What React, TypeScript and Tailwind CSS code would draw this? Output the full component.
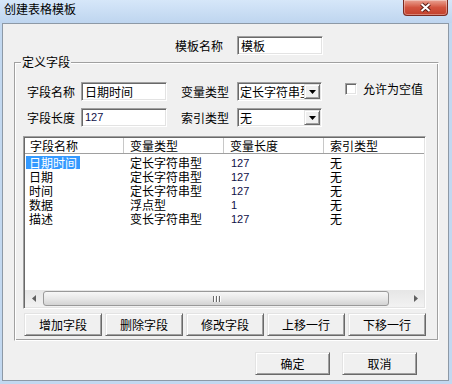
import React from "react";

const sunken =
  "border border-t-[#a0a0a0] border-l-[#a0a0a0] border-r-white border-b-white shadow-[inset_1px_1px_0_#696969,inset_-1px_-1px_0_#e3e3e3]";
const raised =
  "border border-t-[#e3e3e3] border-l-[#e3e3e3] border-r-[#696969] border-b-[#696969] shadow-[inset_1px_1px_0_#fff,inset_-1px_-1px_0_#a0a0a0] bg-[#f0f0f0]";
const num = "font-['Liberation_Sans',Arial,sans-serif] text-[11px] text-[#101048]";

const TextBox = ({ value, numeric, className }: { value: string; numeric?: boolean; className: string }) => (
  <div className={`${sunken} bg-white h-[19px] p-[1px] flex items-center pl-[3px] ${className}`}>
    <span className={numeric ? num : ""}>{value}</span>
  </div>
);

const Combo = ({ value, className }: { value: string; className: string }) => (
  <div className={`${sunken} bg-white h-[19px] p-[1px] flex ${className}`}>
    <span className="flex-1 overflow-hidden whitespace-nowrap pl-[1px] leading-[15px]">{value}</span>
    <div className={`${raised} w-[16px] h-[15px] flex items-center justify-center`}>
      <svg width="7" height="4" viewBox="0 0 7 4">
        <path d="M0 0 H7 L3.5 4 Z" fill="#000" />
      </svg>
    </div>
  </div>
);

const Button = ({ label, className }: { label: string; className: string }) => (
  <div className={`${raised} flex items-center justify-center ${className}`}>{label}</div>
);

const rows = [
  ["日期时间", "定长字符串型", "127", "无"],
  ["日期", "定长字符串型", "127", "无"],
  ["时间", "定长字符串型", "127", "无"],
  ["数据", "浮点型", "1", "无"],
  ["描述", "变长字符串型", "127", "无"],
];

export default function App() {
  return (
    <div className="w-[452px] h-[384px] bg-[#c2d8f0] flex flex-col text-[12px] text-black font-['Noto_Sans_CJK_SC','Noto_Sans',sans-serif]">
      {/* title bar */}
      <div className="h-[23px] flex items-start bg-linear-to-b from-[#d6e7f9] to-[#bed5ef]">
        <span className="pl-[4px] pt-[1px] leading-[16px]">创建表格模板</span>
        <div className="ml-auto mr-[4px] w-[45px] h-[16px] rounded-b-[4px] border border-t-0 border-[#7a2a20] bg-linear-to-b from-[#e9a293] via-[#d2533e] to-[#c2402b] flex items-center justify-center shadow-[inset_0_0_0_1px_rgba(255,255,255,0.35)]">
          <svg width="13" height="11" viewBox="0 0 13 11">
            <path d="M2.5 2 L10.5 9 M10.5 2 L2.5 9" stroke="#5a1e16" strokeWidth="4" />
            <path d="M2.5 2 L10.5 9 M10.5 2 L2.5 9" stroke="#fff" strokeWidth="2" />
          </svg>
        </div>
      </div>

      {/* client area */}
      <div className="ml-[2px] mr-[3px] h-[358px] border border-[#8d99a6] bg-[#f0f0f0] flex flex-col">
        <div className="mt-[12px] pl-[172px] flex items-center">
          <span className="w-[48px]">模板名称</span>
          <TextBox value="模板" className="ml-[14px] w-[86px]" />
        </div>

        {/* group box */}
        <div className="relative mt-[7px] ml-[11px] w-[425px] h-[279px] border border-t-[#a0a0a0] border-l-[#a0a0a0] border-r-white border-b-white shadow-[inset_1px_1px_0_#fff,inset_-1px_-1px_0_#a0a0a0] flex flex-col">
          <span className="absolute -top-[8px] left-[6px] px-[1px] bg-[#f0f0f0] leading-[14px]">定义字段</span>

          <div className="mt-[19px] pl-[12px] h-[19px] flex items-center">
            <span className="w-[48px]">字段名称</span>
            <TextBox value="日期时间" className="ml-[6px] w-[86px]" />
            <span className="ml-[14px] w-[48px]">变量类型</span>
            <Combo value="定长字符串型" className="ml-[8px] w-[85px]" />
            <div className="self-start ml-[23px] flex items-start">
              <div className={`${sunken} bg-white mt-[1px] w-[12px] h-[12px]`} />
              <span className="ml-[6px] leading-[14px]">允许为空值</span>
            </div>
          </div>

          <div className="mt-[7px] pl-[12px] h-[19px] flex items-center">
            <span className="w-[48px]">字段长度</span>
            <TextBox value="127" numeric className="ml-[6px] w-[86px]" />
            <span className="ml-[14px] w-[48px]">索引类型</span>
            <Combo value="无" className="ml-[8px] w-[85px]" />
          </div>

          {/* list view */}
          <div className={`mt-[9px] ml-[8px] w-[403px] h-[173px] p-[1px] ${sunken} bg-white flex flex-col`}>
            <div className="h-[16px] flex border-b border-[#a0a0a0] leading-[15px]">
              <div className="w-[99px] pl-[5px] border-r border-[#c8c8c8]">字段名称</div>
              <div className="w-[100px] pl-[6px] border-r border-[#c8c8c8]">变量类型</div>
              <div className="w-[100px] pl-[6px] border-r border-[#c8c8c8]">变量长度</div>
              <div className="flex-1 pl-[6px]">索引类型</div>
            </div>
            <div className="flex-1 pt-[2px]">
              {rows.map((r, i) => (
                <div key={i} className="h-[14px] flex leading-[14px]">
                  <div className="w-[99px] pl-[1px]">
                    <span className={i === 0 ? "inline-block bg-[#3399ff] text-white px-[3px] leading-[13px]" : "px-[3px]"}>{r[0]}</span>
                  </div>
                  <div className="w-[100px] pl-[6px]">{r[1]}</div>
                  <div className={`w-[100px] pl-[7px] ${num}`}>{r[2]}</div>
                  <div className="pl-[6px]">{r[3]}</div>
                </div>
              ))}
            </div>
            {/* horizontal scrollbar */}
            <div className="h-[17px] flex bg-linear-to-b from-[#e6e6e6] to-[#f2f2f2]">
              <div className="w-[17px] flex items-center justify-center">
                <svg width="4" height="7" viewBox="0 0 4 7">
                  <path d="M4 0 V7 L0 3.5 Z" fill="#606060" />
                </svg>
              </div>
              <div className="ml-[1px] mt-[1px] w-[346px] h-[15px] rounded-[3px] border border-[#999] bg-linear-to-b from-[#f7f7f7] via-[#e8e8e8] to-[#d3d3d3] flex items-center justify-center gap-[2px]">
                <div className="w-[1px] h-[6px] bg-[#6a6a6a] shadow-[1px_0_0_#fff]" />
                <div className="w-[1px] h-[6px] bg-[#6a6a6a] shadow-[1px_0_0_#fff]" />
                <div className="w-[1px] h-[6px] bg-[#6a6a6a] shadow-[1px_0_0_#fff]" />
              </div>
              <div className="flex-1" />
              <div className="w-[17px] flex items-center justify-center">
                <svg width="4" height="7" viewBox="0 0 4 7">
                  <path d="M0 0 V7 L4 3.5 Z" fill="#606060" />
                </svg>
              </div>
            </div>
          </div>

          <div className="mt-[4px] ml-[9px] flex gap-[3px]">
            {["增加字段", "删除字段", "修改字段", "上移一行", "下移一行"].map((t) => (
              <Button key={t} label={t} className="w-[78px] h-[23px]" />
            ))}
          </div>
        </div>

        <div className="mt-[11px] pl-[252px] flex gap-[12px]">
          <Button label="确定" className="w-[75px] h-[23px]" />
          <Button label="取消" className="w-[75px] h-[23px]" />
        </div>
      </div>
    </div>
  );
}
